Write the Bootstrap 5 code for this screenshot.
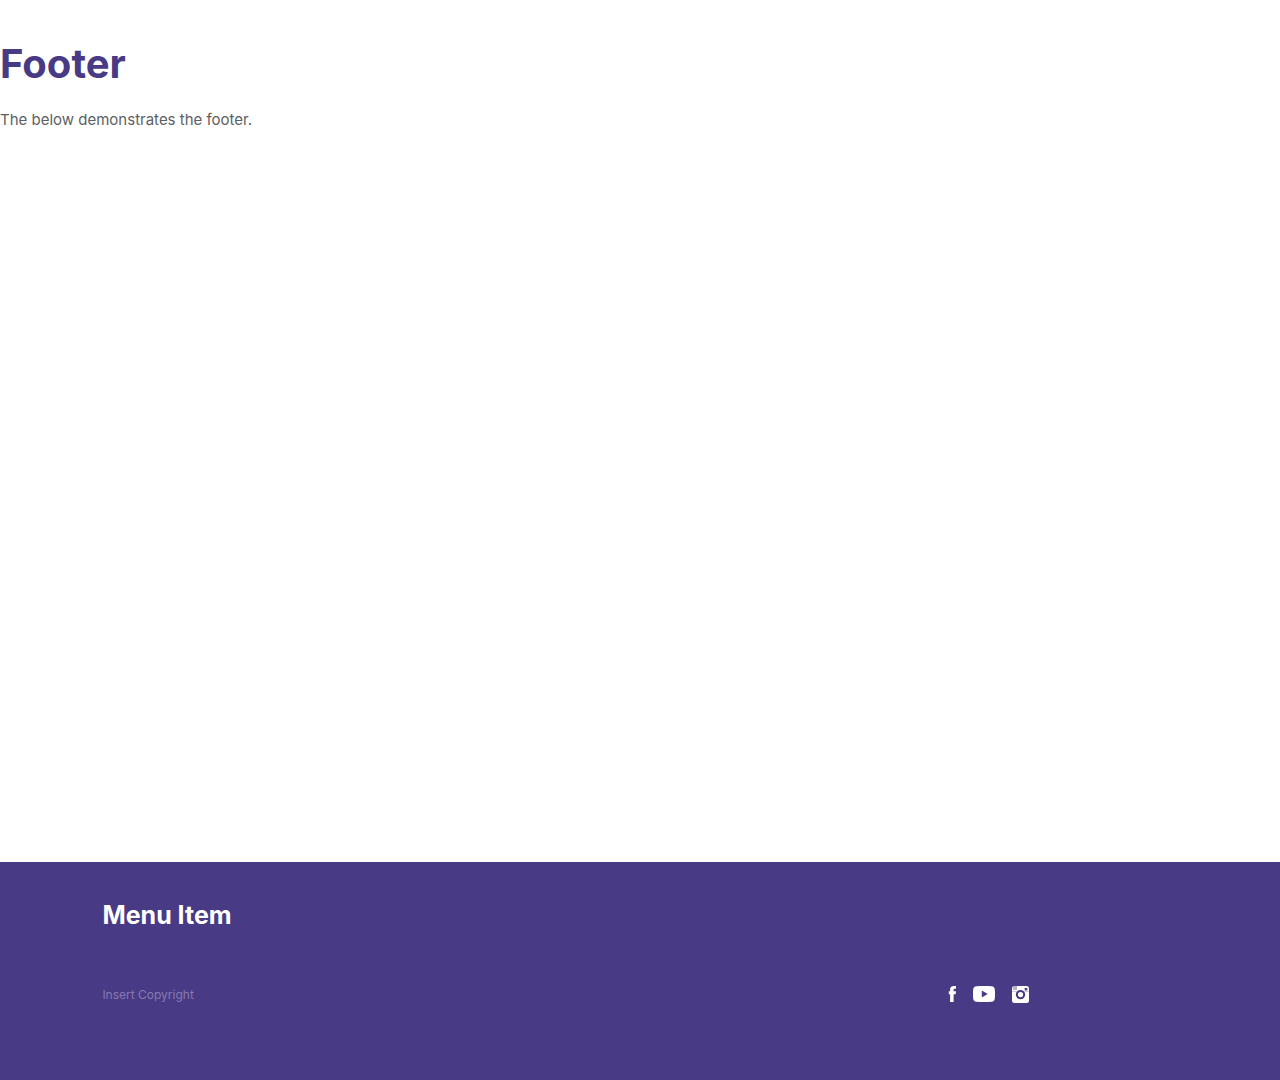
<!DOCTYPE html>
<html lang="en">
<head>
<meta charset="utf-8">
<meta name="viewport" content="width=device-width, initial-scale=1">
<title>Footer</title>
<link href="https://cdn.jsdelivr.net/npm/bootstrap@5.3.0/dist/css/bootstrap.min.css" rel="stylesheet">
<style>
  body { font-family: Inter, "Liberation Sans", sans-serif; color: #5d5f63; background: #fff; }
  .page-main { padding-top: 40px; }
  .page-title { color: #483a84; font-size: 40px; line-height: 48px; font-weight: 700; margin-bottom: 20px; }
  .page-text { font-size: 15px; line-height: 24px; }
  .site-footer { background: #483a84; padding: 36px 8% 69px; }
  .footer-link { color: #fff; font-size: 25px; line-height: 34px; font-weight: 700; }
  .footer-bottom { margin-top: 46px; min-height: 33px; }
  .copyright { color: #857bb0; font-size: 12px; line-height: 18px; }
  .social { padding-left: 39px; gap: 17px; }
  .social svg { display: block; fill: #fff; }
</style>
</head>
<body>
<div class="d-flex flex-column min-vh-100">
  <main class="page-main flex-grow-1">
    <h1 class="page-title">Footer</h1>
    <p class="page-text mb-0">The below demonstrates the footer.</p>
  </main>
  <footer class="site-footer">
    <a class="footer-link d-inline-block text-decoration-none" href="#">Menu Item</a>
    <div class="footer-bottom row g-0 align-items-center">
      <div class="col-9 copyright">Insert Copyright</div>
      <div class="col-3">
        <ul class="social list-unstyled d-flex align-items-start mb-0">
          <li><a href="#" aria-label="Facebook"><svg width="8" height="16" viewBox="0 0 8 16"><path d="M2.100 16V8.200H.8V5.300h1.300V3.700C2.100 1.300 3.300 0 5.700 0H8v2.700H6.700c-.8 0-1.100.4-1.100 1.200v1.400H8l-.3 2.900H5.600V16z"/></svg></a></li>
          <li><a href="#" aria-label="YouTube"><svg width="22" height="16" viewBox="0 0 22 16"><path fill-rule="evenodd" d="M3.500.3C8 0 14 0 18.500.3 20.800.5 21.600 1.600 21.800 3.500c.3 3 .3 6 0 9-.2 1.900-1 3-3.300 3.200-4.500.3-10.500.3-15 0C1.200 15.500.4 14.400.2 12.500c-.3-3-.3-6 0-9C.4 1.600 1.200.5 3.500.3zM8.800 4.600v7L14.700 8z"/></svg></a></li>
          <li><a href="#" aria-label="Instagram"><svg width="17" height="17" viewBox="0 0 17 17"><path fill-rule="evenodd" d="M2.500 0h12A2.500 2.500 0 0 1 17 2.500v12a2.500 2.500 0 0 1-2.500 2.500h-12A2.500 2.500 0 0 1 0 14.500v-12A2.500 2.500 0 0 1 2.500 0zM12.700 1.900v2.500h2.600V1.900zM8.500 3.900a4.700 4.700 0 1 0 0 9.400 4.700 4.700 0 0 0 0-9.400zm0 2.100a2.600 2.600 0 1 1 0 5.200 2.600 2.600 0 0 1 0-5.200z"/><path fill="#483a84" d="M1 .7h.4V4H1zM2 .1h.4V4H2zM3 0h.4v4H3zM4 0h.4v4H4zM0 5.400h4.600v.3H0zM12.400 5.400H17v.3h-4.600z"/></svg></a></li>
        </ul>
      </div>
    </div>
  </footer>
</div>
<script src="https://cdn.jsdelivr.net/npm/bootstrap@5.3.0/dist/js/bootstrap.bundle.min.js"></script>
</body>
</html>
